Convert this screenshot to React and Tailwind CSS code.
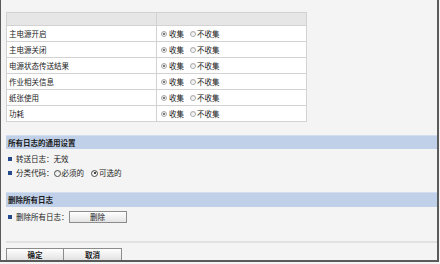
import React from "react";

const rows = ["主电源开启", "主电源关闭", "电源状态传送结果", "作业相关信息", "纸张使用", "功耗"];

function Radio({ checked, dark }) {
  const ring = dark ? "border-[#4a4a4a]" : "border-[#a8a8a8]";
  const dot = dark ? "bg-[#111]" : "bg-[#555]";
  const size = dark ? "w-[7px] h-[7px]" : "w-[6px] h-[6px]";
  return (
    <span className={`inline-flex items-center justify-center rounded-full border ${ring} ${size} bg-gradient-to-b from-[#e4e4e4] to-white shrink-0`}>
      {checked && <span className={`w-[2px] h-[2px] rounded-full ${dot}`} />}
    </span>
  );
}

function Bullet() {
  return <span className="w-[4px] h-[4px] bg-[#244a8c] ml-[2px] mr-[4px] shrink-0" />;
}

export default function App() {
  return (
    <div className="w-[440px] h-[264px] bg-[#f4f4f4]" style={{ fontFamily: '"Noto Sans CJK SC", "Noto Sans", sans-serif' }}>
      <div className="w-[439px] h-[262px] border-l border-r-2 border-b-2 border-[#5a5a5a] bg-[#f4f4f4] flex flex-col pl-[5px] pt-[12px] text-[7.5px] leading-none text-[#222]">
        <div className="w-[301px] border border-[#d2d2d2] bg-white flex flex-col">
          <div className="h-[12px] bg-[#e6e6e6] grid grid-cols-[150px_1fr]">
            <div className="border-r border-[#d2d2d2]" />
            <div />
          </div>
          {rows.map((r) => (
            <div key={r} className="h-[16px] border-t border-[#d2d2d2] grid grid-cols-[150px_1fr]">
              <div className="border-r border-[#d2d2d2] flex items-center pl-[2px]">{r}</div>
              <div className="flex items-center pl-[4px]">
                <Radio checked />
                <span className="ml-[2px]">收集</span>
                <span className="ml-[6px]" />
                <Radio />
                <span className="ml-[1px]">不收集</span>
              </div>
            </div>
          ))}
        </div>

        <div className="mt-[13px] h-[14px] bg-[#bfd0e8] border-t border-[#d3dff0] flex items-center pl-[2px] font-bold text-[#1a1a1a]">
          所有日志的通用设置
        </div>
        <div className="mt-[3px] h-[14px] flex items-center">
          <Bullet />
          <span>转送日志：无效</span>
        </div>
        <div className="h-[14px] flex items-center">
          <Bullet />
          <span>分类代码：</span>
          <Radio dark />
          <span className="ml-[1px]">必须的</span>
          <span className="ml-[7px]" />
          <Radio dark checked />
          <span className="ml-[1px]">可选的</span>
        </div>

        <div className="mt-[12px] h-[15px] bg-[#bfd0e8] border-t border-[#d3dff0] flex items-center pl-[2px] font-bold text-[#1a1a1a]">
          删除所有日志
        </div>
        <div className="mt-[4px] h-[12px] flex items-center">
          <Bullet />
          <span>删除所有日志：</span>
          <span className="w-[58px] h-[12px] border border-[#8c8c8c] bg-gradient-to-b from-white to-[#e4e4e4] flex items-center justify-center">
            删除
          </span>
        </div>

        <div className="mt-[18px] h-[2px] bg-[#e2e2e2]" />

        <div className="mt-[5px] flex-1 flex">
          <span className="w-[58px] h-full border border-b-0 border-[#8c8c8c] bg-gradient-to-b from-white to-[#e2e2e2] flex items-center justify-center font-bold">
            确定
          </span>
          <span className="w-[58px] h-full border border-l-0 border-b-0 border-[#8c8c8c] bg-gradient-to-b from-white to-[#e2e2e2] flex items-center justify-center font-bold">
            取消
          </span>
        </div>
      </div>
    </div>
  );
}
